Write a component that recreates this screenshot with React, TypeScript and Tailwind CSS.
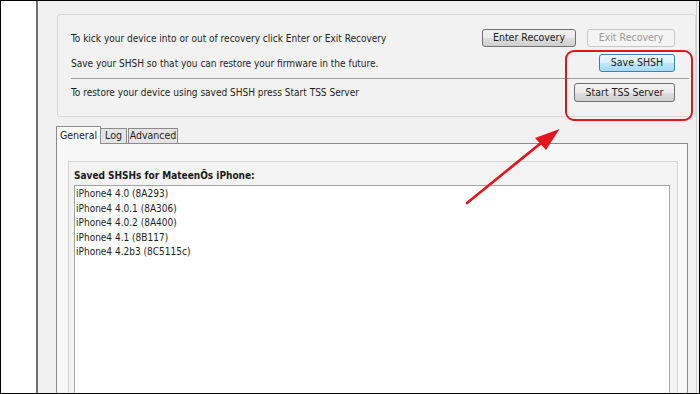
// Janela do utilitário de SHSH, com a anotação em vermelho por cima.
const font = { fontFamily: '"DejaVu Sans Condensed", "DejaVu Sans", sans-serif' };

const versoes = [
  "iPhone4 4.0 (8A293)",
  "iPhone4 4.0.1 (8A306)",
  "iPhone4 4.0.2 (8A400)",
  "iPhone4 4.1 (8B117)",
  "iPhone4 4.2b3 (8C5115c)",
];

function Botao({ children, tipo = "normal", className = "" }: { children: string; tipo?: "normal" | "foco" | "off"; className?: string }) {
  const estilos = {
    normal: "border-[#707070] bg-[linear-gradient(#f2f2f2_0%,#ebebeb_50%,#dddddd_51%,#cfcfcf_100%)] text-[#1a1a1a]",
    foco: "border-[#3c7fb1] bg-[linear-gradient(#eaf6fd_0%,#d9f0fc_50%,#bee6fd_51%,#a7d9f5_100%)] text-[#1a1a1a]",
    off: "border-[#c5c8ca] bg-[#f4f4f4] text-[#9a9a9a]",
  };
  return (
    <div className={`flex h-[18px] items-center justify-center rounded-[3px] border text-[10.5px] ${estilos[tipo]} ${className}`}>
      {children}
    </div>
  );
}

export default function App() {
  return (
    <div className="relative flex h-[394px] w-[700px] overflow-hidden border border-black bg-white text-[#1e1e1e]" style={font}>
      <div className="w-[35px] shrink-0 bg-white" />
      <div className="flex flex-1 border-l-2 border-[#707070] bg-[#f0f0f0] pr-[2px]">
        <div className="flex flex-1 flex-col border-r border-[#cfcfcf] pl-[19px]">
          {/* painel de recovery / SHSH */}
          <div className="mt-[13px] flex flex-col rounded-[3px] border border-[#d8d8d8] bg-[#f2f2f2] pb-[14px] pl-[13px] pr-[20px] pt-[14px] text-[10px]">
            <div className="flex h-[18px] items-center">
              <span className="flex-1">To kick your device into or out of recovery click Enter or Exit Recovery</span>
              <Botao className="w-[94px]">Enter Recovery</Botao>
              <Botao tipo="off" className="ml-[11px] w-[88px]">Exit Recovery</Botao>
            </div>
            <div className="mt-[7px] flex h-[18px] items-center">
              <span className="flex-1">Save your SHSH so that you can restore your firmware in the future.</span>
              <Botao tipo="foco" className="w-[76px]">Save SHSH</Botao>
            </div>
            <div className="mr-[-14px] mt-[6px] h-px bg-[#a0a0a0]" />
            <div className="mt-[4px] flex h-[19px] items-center">
              <span className="flex-1">To restore your device using saved SHSH press Start TSS Server</span>
              <Botao className="h-[19px] w-[101px]">Start TSS Server</Botao>
            </div>
          </div>

          {/* abas */}
          <div className="ml-[-1px] mr-[8px] mt-[9px] flex flex-1 flex-col">
            <div className="flex items-end text-[10.5px]">
              <div className="relative z-10 -mb-px flex h-[18px] w-[45px] items-center justify-center border border-b-0 border-[#8c8c8c] bg-[#fafafa]">
                General
              </div>
              <div className="flex h-[15px] w-[26px] items-center justify-center border border-l-0 border-b-0 border-[#8c8c8c] bg-[#e4e4e4]">
                Log
              </div>
              <div className="ml-px flex h-[15px] w-[50px] items-center justify-center border border-b-0 border-[#8c8c8c] bg-[#e4e4e4]">
                Advanced
              </div>
            </div>
            <div className="flex flex-1 flex-col border border-b-0 border-[#8c8c8c] bg-[#f7f7f7] pl-[11px] pr-[9px] pt-[17px]">
              <div className="flex flex-1 flex-col border border-b-0 border-[#d5d5d5] bg-[#f3f3f3] pl-[5px] pr-[7px] pt-[6px]">
                <div className="text-[10px] font-bold text-[#1a1a1a]">Saved SHSHs for MateenÕs iPhone:</div>
                <div className="mt-[2px] flex-1 border border-b-0 border-[#a5a5a5] bg-white pl-px pt-[1px] text-[10px] leading-[14.5px]">
                  {versoes.map((v) => (
                    <div key={v}>{v}</div>
                  ))}
                </div>
              </div>
            </div>
          </div>
        </div>
      </div>

      {/* destaque vermelho */}
      <div className="absolute left-[564px] top-[49px] h-[71px] w-[128px] rounded-[9px] border-[2.5px] border-[#e3141b]" />
      <svg className="absolute left-0 top-0" width="700" height="394">
        <line x1="466" y1="202" x2="545" y2="138" stroke="#e3141b" strokeWidth="2.6" strokeLinecap="round" />
        <polygon points="558.5,128 534,137 545,149" fill="#e3141b" />
      </svg>
    </div>
  );
}
